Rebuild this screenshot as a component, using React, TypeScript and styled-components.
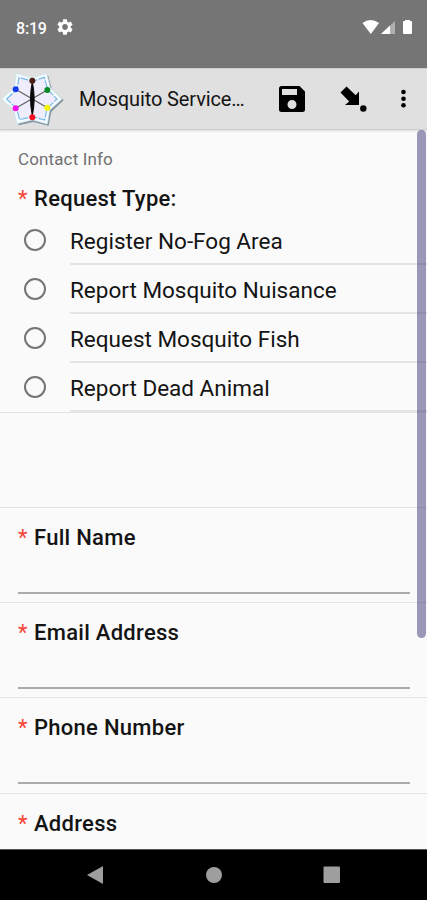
import React from "react";
import styled, { createGlobalStyle } from "styled-components";

const GlobalStyle = createGlobalStyle`
  * { box-sizing: border-box; }
  body { margin: 0; font-family: Roboto, "Liberation Sans", sans-serif; background: #fafafa; }
`;

const Screen = styled.div`
  display: flex;
  flex-direction: column;
  width: 427px;
  height: 900px;
  overflow: hidden;
  background: #fafafa;
  color: #141414;
`;

const StatusBar = styled.header`
  flex: none;
  display: flex;
  height: 68px;
  padding: 18px 15px 0 16px;
  background: #757575;
  color: #fff;
`;

const Clock = styled.span`
  width: 41px;
  font-size: 16px;
  line-height: 21px;
  font-weight: 500;
  letter-spacing: -0.2px;
`;

const StatusIcons = styled.svg`
  margin-left: auto;
  display: block;
`;

const AppBar = styled.div`
  flex: none;
  display: flex;
  align-items: center;
  height: 62px;
  background: #e0e0e0;
  border-top: 1px solid #cfcfcf;
  border-bottom: 1px solid #cccccc;
  box-shadow: 0 1px 2px rgba(0, 0, 0, 0.12);
  z-index: 1;
`;

const AppTitle = styled.h1`
  margin: 0 0 0 15px;
  width: 190px;
  font-size: 20px;
  line-height: 26px;
  font-weight: 400;
  letter-spacing: -0.12px;
  white-space: nowrap;
`;

const Icon = styled.svg`
  flex: none;
  display: block;
`;

const Content = styled.main`
  position: relative;
  flex: 1;
  min-height: 0;
  overflow: hidden;
`;

const ScrollThumb = styled.div`
  position: absolute;
  top: 0;
  right: 1px;
  width: 9px;
  height: 508px;
  border-radius: 5px;
  background: rgba(63, 61, 120, 0.52);
`;

const SectionTitle = styled.h2`
  margin: 0;
  padding: 17px 18px 0;
  height: 53px;
  font-size: 17px;
  line-height: 24px;
  font-weight: 400;
  letter-spacing: 0.13px;
  color: #707070;
`;

const Label = styled.div`
  display: flex;
  font-size: 22px;
  line-height: 32px;
  font-weight: 500;
  letter-spacing: 0.28px;
  white-space: nowrap;
`;

const Required = styled.span`
  width: 16px;
  font-weight: 400;
  letter-spacing: 0;
  color: #f44336;
`;

const Question = styled.section`
  height: 230px;
  padding-left: 18px;
  border-bottom: 1px solid #e4e4e4;
`;

const Options = styled.div`
  height: 198px;
  padding-top: 1px;
`;

const Option = styled.div`
  display: flex;
  height: 49px;
`;

const Radio = styled.span`
  flex: none;
  width: 22px;
  height: 22px;
  margin: 13px 24px 0 6px;
  border: 2px solid #757575;
  border-radius: 50%;
`;

const OptionText = styled.span`
  flex: 1;
  border-bottom: 2px solid #e4e4e4;
  font-size: 22.5px;
  line-height: 51px;
  white-space: nowrap;
`;

const Spacer = styled.div`
  height: 95px;
  border-bottom: 1px solid #e4e4e4;
`;

const Field = styled.section`
  height: 95.2px;
  padding: 14px 17px 0 18px;
  border-bottom: 1px solid #e4e4e4;
`;

const Input = styled.div`
  height: 40px;
  border-bottom: 2px solid #ababab;
`;

const NavBar = styled.nav`
  flex: none;
  display: flex;
  justify-content: space-between;
  align-items: center;
  height: 51px;
  padding: 0 86px;
  background: #000;
  border-top: 1px solid #555;
`;

const Logo = () => (
  <Icon width="64" height="62" viewBox="0 24 192 186">
    <path d="M12 121L48 88 55 46 99 61 144 45 156 88 191 121 154 155 146 197 99 186 56 196 47 155Z" fill="#6d7f8b" opacity=".8" />
    <path d="M5 117L43 83 49 40 97 54 140 40 151 83 186 117 149 151 142 192 97 180 51 191 42 151Z" fill="#f6fcff" stroke="#c3e2ee" strokeWidth="2" />
    <path d="M20 117L51 88 57 52 97 64 133 52 143 88 171 117 141 146 134 180 97 170 59 179 50 146Z" fill="#efedfb" stroke="#74b9e8" strokeWidth="3.5" strokeDasharray="24 4" />
    <path d="M47 88L142 143M142 90L47 145M97 62V172" stroke="#606060" strokeWidth="3.5" />
    <path d="M97 66Q108 117 97 166Q86 117 97 66Z" fill="#080808" stroke="#080808" strokeWidth="3" />
    <circle cx="97" cy="62" r="9" fill="#4c1d12" />
    <circle cx="142" cy="90" r="9" fill="#078b25" />
    <circle cx="142" cy="143" r="9" fill="#f5f500" />
    <circle cx="97" cy="172" r="9" fill="#f41020" />
    <circle cx="47" cy="145" r="9" fill="#f414ed" />
    <circle cx="47" cy="88" r="9" fill="#153cef" />
  </Icon>
);

const gearPath =
  "M19.14 12.94c.04-.3.06-.61.06-.94 0-.32-.02-.64-.07-.94l2.03-1.58c.18-.14.23-.41.12-.61l-1.92-3.32c-.12-.22-.37-.29-.59-.22l-2.39.96c-.5-.38-1.03-.7-1.62-.94l-.36-2.54c-.04-.24-.24-.41-.48-.41h-3.84c-.24 0-.43.17-.47.41l-.36 2.54c-.59.24-1.13.57-1.62.94l-2.39-.96c-.22-.08-.47 0-.59.22L2.74 8.87c-.12.21-.08.47.12.61l2.03 1.58c-.05.3-.09.63-.09.94s.02.64.07.94l-2.03 1.58c-.18.14-.23.41-.12.61l1.92 3.32c.12.22.37.29.59.22l2.39-.96c.5.38 1.03.7 1.62.94l.36 2.54c.05.24.24.41.48.41h3.84c.24 0 .44-.17.47-.41l.36-2.54c.59-.24 1.13-.56 1.62-.94l2.39.96c.22.08.47 0 .59-.22l1.92-3.32c.12-.22.07-.47-.12-.61l-2.01-1.58zM12 15.6c-1.98 0-3.6-1.62-3.6-3.6s1.62-3.6 3.6-3.6 3.6 1.62 3.6 3.6-1.62 3.6-3.6 3.6z";

const options = [
  "Register No-Fog Area",
  "Report Mosquito Nuisance",
  "Request Mosquito Fish",
  "Report Dead Animal",
];

const fields = ["Full Name", "Email Address", "Phone Number", "Address"];

export default function App() {
  return (
    <>
      <GlobalStyle />
      <Screen>
        <StatusBar>
          <Clock>8:19</Clock>
          <Icon width="16" height="18" viewBox="2 2 20 20" fill="#fff">
            <path d={gearPath} />
          </Icon>
          <StatusIcons width="50" height="20" viewBox="0 0 50 20" fill="#fff">
            <path d="M0.5 5Q8.5 -1 17 5L8.8 16Z" />
            <path d="M19 16L33 3V16Z" opacity=".42" />
            <path d="M19 16L28 7.5V16Z" />
            <path d="M43 3V2H48V3H49Q50 3 50 4V15Q50 16 49 16H42Q41 16 41 15V4Q41 3 42 3Z" />
          </StatusIcons>
        </StatusBar>
        <AppBar>
          <Logo />
          <AppTitle>Mosquito Service…</AppTitle>
          <Icon width="48" height="36" viewBox="0 0 48 36">
            <path fillRule="evenodd" d="M12.5 5H30.5L36 10.5V28.5Q36 31 33.5 31H12.5Q10 31 10 28.5V7.5Q10 5 12.5 5ZM13 8V14H28V8ZM23 19A4.5 4.5 0 1 0 23 28A4.5 4.5 0 1 0 23 19Z" />
          </Icon>
          <Icon width="64" height="40" viewBox="0 0 64 40">
            <path d="M29.5 7.5L38.7 16.2 42 12.5V26H28L32.2 22.4 23.5 13.5Z" />
            <circle cx="46.3" cy="29.5" r="3.2" />
          </Icon>
          <Icon width="40" height="40" viewBox="0 0 40 40">
            <circle cx="22.5" cy="13" r="2.3" />
            <circle cx="22.5" cy="19.7" r="2.3" />
            <circle cx="22.5" cy="26.2" r="2.3" />
          </Icon>
        </AppBar>
        <Content>
          <SectionTitle>Contact Info</SectionTitle>
          <Question>
            <Label>
              <Required>*</Required>Request Type:
            </Label>
            <Options>
              {options.map((text) => (
                <Option key={text}>
                  <Radio />
                  <OptionText>{text}</OptionText>
                </Option>
              ))}
            </Options>
          </Question>
          <Spacer />
          {fields.map((name) => (
            <Field key={name}>
              <Label>
                <Required>*</Required>
                {name}
              </Label>
              <Input />
            </Field>
          ))}
          <ScrollThumb />
        </Content>
        <NavBar>
          <Icon width="18" height="20" viewBox="0 0 18 20" fill="#9e9e9e">
            <path d="M1 10L17 1V19Z" />
          </Icon>
          <Icon width="17" height="18" viewBox="0 0 17 18" fill="#9e9e9e">
            <circle cx="9" cy="9" r="8" />
          </Icon>
          <Icon width="18" height="18" viewBox="0 0 18 18" fill="#9e9e9e">
            <rect x="0.5" y="0.5" width="16.5" height="16.5" rx="1" />
          </Icon>
        </NavBar>
      </Screen>
    </>
  );
}
